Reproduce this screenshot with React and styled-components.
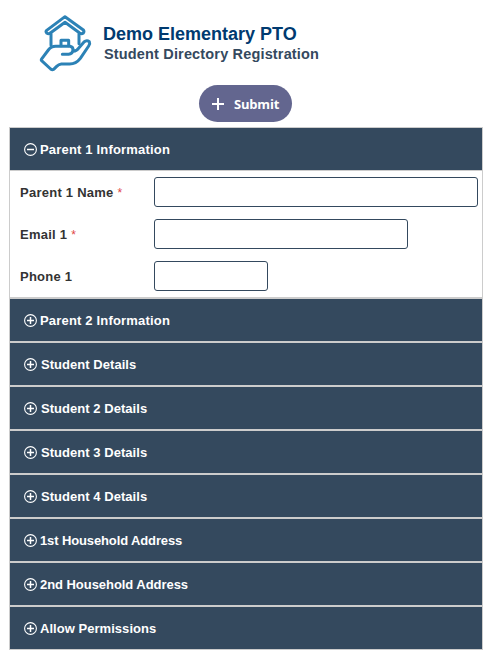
import React from 'react';
import styled, { createGlobalStyle } from 'styled-components';

const GlobalStyle = createGlobalStyle`
  * {
    box-sizing: border-box;
  }
  body {
    margin: 0;
    background: #fff;
    font-family: 'Liberation Sans', Arial, sans-serif;
  }
`;

const Page = styled.div`
  width: 492px;
  height: 661px;
  padding: 5px 9px 0;
`;

const Header = styled.header`
  display: flex;
  height: 80px;
  padding-left: 21px;
`;

const Logo = styled.svg`
  width: 70px;
  height: 70px;
  flex: none;
  fill: none;
  stroke: #2c82b6;
  stroke-width: 9;
  stroke-linecap: round;
  stroke-linejoin: round;
`;

const Titles = styled.div`
  padding: 18px 0 0 3px;
  white-space: nowrap;
`;

const Title = styled.h1`
  margin: 0;
  font-size: 18px;
  line-height: 22px;
  color: #003a70;
`;

const Subtitle = styled.h2`
  margin: 0 0 0 1px;
  font-size: 14.5px;
  line-height: 18px;
  letter-spacing: 0.16px;
  color: #34495e;
`;

const Submit = styled.button`
  display: flex;
  align-items: center;
  gap: 10px;
  width: 93px;
  height: 37px;
  margin: 0 0 5px 190px;
  padding: 1px 0 0 13px;
  border: 0;
  border-radius: 19px;
  background: #63668f;
  color: #fff;
  font: 700 13px/18px 'Open Sans', sans-serif;
  letter-spacing: -0.2px;
  svg {
    width: 12px;
    height: 12px;
    flex: none;
  }
`;

const Section = styled.section`
  border: 1px solid #ccc;
`;

const SectionHeader = styled.div`
  display: flex;
  align-items: center;
  height: 42px;
  padding-left: 14px;
  background: #34495e;
  color: #fff;
  font-size: 13px;
  font-weight: 700;
  letter-spacing: ${p => p.$spacing}px;
  white-space: nowrap;
  svg {
    width: 13px;
    height: 13px;
    flex: none;
    margin-right: ${p => p.$gap || 3}px;
    fill: none;
    stroke: #fff;
  }
`;

const Fields = styled.div`
  border-top: 1px solid #ccc;
`;

const Field = styled.label`
  display: grid;
  grid-template-columns: 134px 1fr;
  align-items: center;
  height: 42px;
  padding-left: 10px;
  color: #333;
  font-size: 13px;
  font-weight: 700;
  letter-spacing: 0.25px;
`;

const Required = styled.span`
  color: #e04545;
  font-size: 12px;
  font-weight: 400;
`;

const Input = styled.input`
  width: ${p => p.$width}px;
  height: 30px;
  border: 1px solid #34495e;
  border-radius: 3px;
  background: #fff;
`;

const fields = [
  { label: 'Parent 1 Name', required: true, width: 324 },
  { label: 'Email 1', required: true, width: 254 },
  { label: 'Phone 1', width: 114 },
];

const closedSections = [
  { name: 'Parent 2 Information', spacing: 0.18 },
  { name: 'Student Details', spacing: 0.04, gap: 4 },
  { name: 'Student 2 Details', spacing: 0.04, gap: 4 },
  { name: 'Student 3 Details', spacing: 0.04, gap: 4 },
  { name: 'Student 4 Details', spacing: 0.04, gap: 4 },
  { name: '1st Household Address', spacing: -0.12 },
  { name: '2nd Household Address', spacing: -0.05 },
  { name: 'Allow Permissions', spacing: 0.04 },
];

const ToggleIcon = ({ open }) => (
  <svg viewBox="0 0 13 13">
    <circle cx="6.5" cy="6.5" r="5.9" strokeWidth="1.1" />
    <path d={open ? 'M3 6.5h7' : 'M3 6.5h7M6.5 3v7'} strokeWidth="1.5" />
  </svg>
);

const HouseLogo = () => (
  <Logo viewBox="0 0 210 210">
    {/* roof */}
    <path d="M105 35L50 76Q46 80 51 85Q56 88 61 84L105 52L149 84Q155 88 160 84Q164 79 159 74Z" />
    {/* walls and door */}
    <path d="M63 87V121M147 87V116M93 122V106H116V122" />
    {/* hand */}
    <path d="M34 163L55 135Q63 124 77 124H120Q130 126 129 136Q127 147 116 148H97M129 139Q141 138 147 128L162 111Q170 104 178 110Q181 116 176 123L151 160Q138 177 119 177H94Q86 178 80 184L71 193Q67 196 62 192L34 166" />
  </Logo>
);

const App = () => (
  <>
    <GlobalStyle />
    <Page>
      <Header>
        <HouseLogo />
        <Titles>
          <Title>Demo Elementary PTO</Title>
          <Subtitle>Student Directory Registration</Subtitle>
        </Titles>
      </Header>
      <Submit type="button">
        <svg viewBox="0 0 12 12">
          <path d="M0 6h12M6 0v12" stroke="#fff" strokeWidth="2" />
        </svg>
        Submit
      </Submit>
      <Section>
        <SectionHeader $spacing={0.18}>
          <ToggleIcon open />
          Parent 1 Information
        </SectionHeader>
        <Fields>
          {fields.map(f => (
            <Field key={f.label}>
              <span>
                {f.label} {f.required && <Required>*</Required>}
              </span>
              <Input $width={f.width} />
            </Field>
          ))}
        </Fields>
      </Section>
      {closedSections.map(({ name, spacing, gap }) => (
        <Section key={name}>
          <SectionHeader $spacing={spacing} $gap={gap}>
            <ToggleIcon />
            {name}
          </SectionHeader>
        </Section>
      ))}
    </Page>
  </>
);

export default App;
